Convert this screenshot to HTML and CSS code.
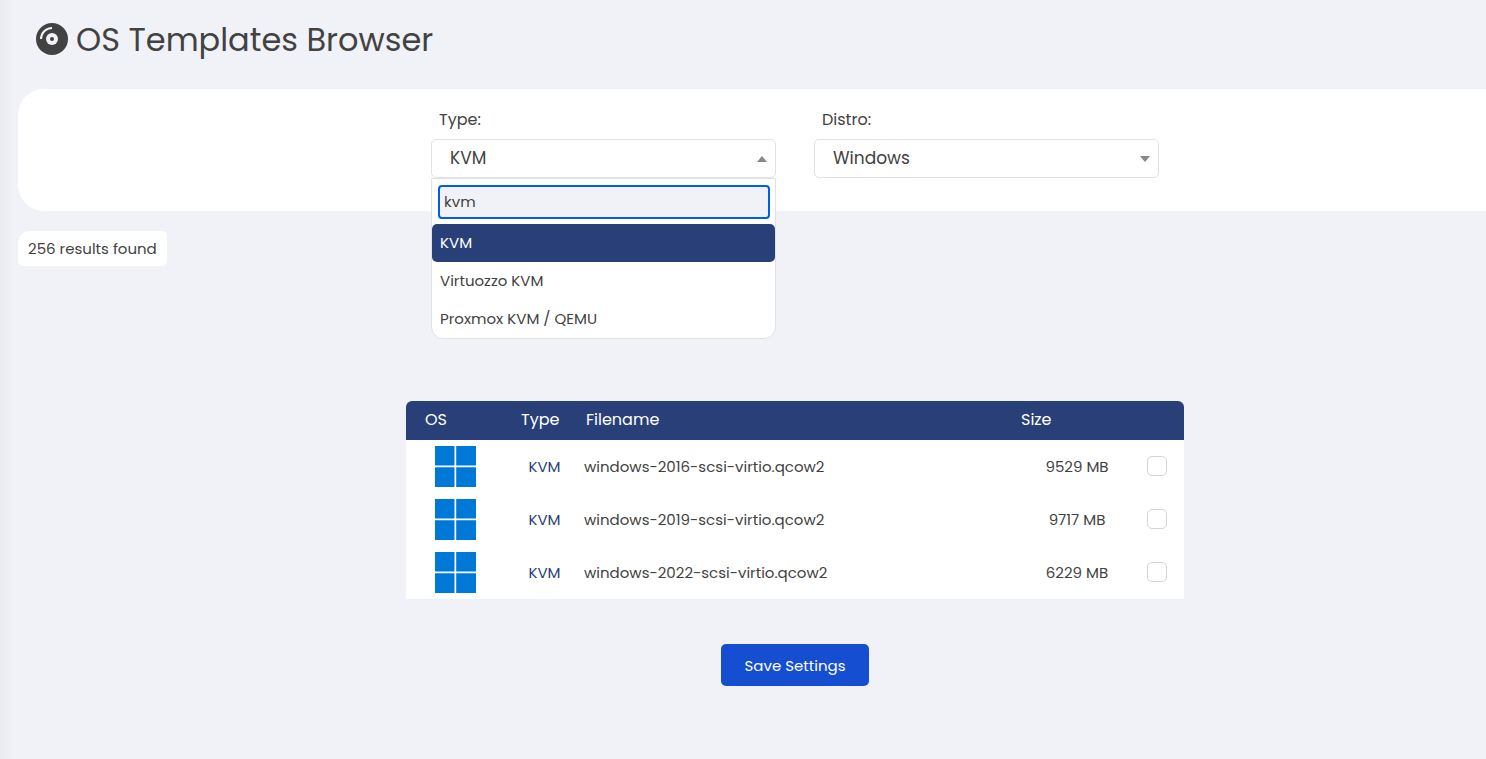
FILE: index.html
```
<!DOCTYPE html>
<html lang="en">
<head>
<meta charset="utf-8">
<meta name="viewport" content="width=device-width, initial-scale=1">
<title>OS Templates Browser</title>
<link rel="stylesheet" href="styles.css">
</head>
<body>
<main class="content">
  <h1 class="page-title">
    <svg class="disc" viewBox="0 0 32 32" aria-hidden="true">
      <circle cx="16" cy="16" r="16" fill="#424242"/>
      <circle cx="16" cy="16" r="6" fill="#f1f2f8"/>
      <circle cx="16" cy="16" r="2" fill="#424242"/>
      <path d="M5 16A11 11 0 0 1 16 5" fill="none" stroke="#f1f2f8" stroke-width="2"/>
    </svg>
    <span>OS Templates Browser</span>
  </h1>

  <form class="filters">
    <div class="field">
      <label class="field-label" for="type">Type:</label>
      <div class="select-box is-open">
        <select id="type" class="select">
          <option selected>KVM</option>
          <option>Virtuozzo KVM</option>
          <option>Proxmox KVM / QEMU</option>
        </select>
        <div class="dropdown">
          <div class="search-wrap"><input class="search" type="text" value="kvm" aria-label="Search types"></div>
          <ul class="options" role="listbox" aria-label="Type">
            <li class="option is-active" role="option" aria-selected="true">KVM</li>
            <li class="option" role="option" aria-selected="false">Virtuozzo KVM</li>
            <li class="option" role="option" aria-selected="false">Proxmox KVM / QEMU</li>
          </ul>
        </div>
      </div>
    </div>
    <div class="field">
      <label class="field-label" for="distro">Distro:</label>
      <div class="select-box">
        <select id="distro" class="select">
          <option selected>Windows</option>
        </select>
      </div>
    </div>
  </form>

  <p class="results">256 results found</p>

  <form class="templates-form">
    <table class="templates">
      <colgroup><col class="col-os"><col class="col-type"><col><col class="col-size"><col class="col-check"></colgroup>
      <thead>
        <tr><th class="head-os">OS</th><th class="head-type">Type</th><th>Filename</th><th class="head-size">Size</th><th></th></tr>
      </thead>
      <tbody>
        <tr>
          <td class="cell-os"><svg class="win" viewBox="0 0 41 41" role="img" aria-label="Windows"><path fill="#0078d7" d="M0 0h19.500v19.500H0zM21.200 0H41v19.500H21.200zM0 21.200h19.500V41H0zM21.200 21.200H41V41H21.200z"/></svg></td>
          <td class="cell-type">KVM</td>
          <td><label for="t2016">windows-2016-scsi-virtio.qcow2</label></td>
          <td class="cell-size">9529 MB</td>
          <td class="cell-check"><input id="t2016" class="check" type="checkbox"></td>
        </tr>
        <tr>
          <td class="cell-os"><svg class="win" viewBox="0 0 41 41" role="img" aria-label="Windows"><path fill="#0078d7" d="M0 0h19.500v19.500H0zM21.200 0H41v19.500H21.200zM0 21.200h19.500V41H0zM21.200 21.200H41V41H21.200z"/></svg></td>
          <td class="cell-type">KVM</td>
          <td><label for="t2019">windows-2019-scsi-virtio.qcow2</label></td>
          <td class="cell-size">9717 MB</td>
          <td class="cell-check"><input id="t2019" class="check" type="checkbox"></td>
        </tr>
        <tr>
          <td class="cell-os"><svg class="win" viewBox="0 0 41 41" role="img" aria-label="Windows"><path fill="#0078d7" d="M0 0h19.500v19.500H0zM21.200 0H41v19.500H21.200zM0 21.200h19.500V41H0zM21.200 21.200H41V41H21.200z"/></svg></td>
          <td class="cell-type">KVM</td>
          <td><label for="t2022">windows-2022-scsi-virtio.qcow2</label></td>
          <td class="cell-size">6229 MB</td>
          <td class="cell-check"><input id="t2022" class="check" type="checkbox"></td>
        </tr>
      </tbody>
    </table>
    <button class="save" type="submit">Save Settings</button>
  </form>
</main>
</body>
</html>
```
FILE: styles.css
```
* {
  box-sizing: border-box;
}

body {
  margin: 0;
  min-height: 100vh;
  background: #f1f2f8 linear-gradient(90deg, #e9eaee, #f1f2f8) no-repeat 0 0 / 14px 100%;
  color: #424242;
  font-family: Poppins, Inter, "Open Sans", sans-serif;
  font-size: 15px;
  line-height: 23px;
}

.content {
  margin-left: 18px;
}

.page-title {
  display: flex;
  align-items: center;
  gap: 8px;
  margin: 0;
  padding: 16px 18px 25px;
  font-size: 32px;
  font-weight: 400;
  line-height: 48px;
}

.disc {
  width: 32px;
  height: 32px;
  margin-bottom: 2px;
}

.filters {
  display: flex;
  justify-content: center;
  gap: 38px;
  padding: 19px 0 33px 86px;
  border-radius: 26px 0 0 26px;
  background: #fff;
}

.field {
  width: 345px;
}

.field-label {
  display: block;
  padding: 0 8px 7px;
  font-size: 16px;
  line-height: 24px;
}

.select-box {
  position: relative;
}

.select {
  display: block;
  width: 100%;
  height: 39px;
  padding: 0 30px 0 18px;
  appearance: none;
  border: 1px solid #e2e2e2;
  border-radius: 5px;
  background: #fff;
  color: #424242;
  font: inherit;
  font-size: 17px;
}

.select-box::after {
  content: "";
  position: absolute;
  top: 17px;
  right: 9px;
  border: 5px solid transparent;
  border-top: 6px solid #888;
  border-bottom: 0;
  pointer-events: none;
}

.select-box.is-open::after {
  border-top: 0;
  border-bottom: 6px solid #888;
}

.dropdown {
  position: absolute;
  z-index: 1;
  top: 100%;
  left: 0;
  width: 100%;
  border: 1px solid #e2e2e2;
  border-radius: 0 0 12px 12px;
  background: #fff;
}

.search-wrap {
  padding: 6px 5px 5px 6px;
}

.search {
  display: block;
  width: 100%;
  height: 34px;
  padding: 0 4px 2px;
  border: 2px solid #0060df;
  border-radius: 4px;
  outline: 0;
  background: #f1f2f8;
  color: #424242;
  font: inherit;
}

.options {
  margin: 0;
  padding: 0;
  list-style: none;
}

.option {
  padding: 7px 8px;
  line-height: 24px;
}

.option.is-active {
  border-radius: 5px;
  background: #293f77;
  color: #fff;
}

.results {
  width: fit-content;
  margin: 20px 0 135px;
  padding: 6px 10px;
  border-radius: 12px 5px 5px 5px;
  background: #fff;
}

.templates-form {
  display: flex;
  flex-direction: column;
  align-items: center;
  gap: 45px;
  padding: 0 0 60px 86px;
}

.templates {
  width: 56%;
  min-width: 778px;
  table-layout: fixed;
  border-collapse: collapse;
  border-radius: 6px 6px 0 0;
  overflow: hidden;
  background: #fff;
}

.col-os {
  width: 99px;
}

.col-type {
  width: 79px;
}

.col-size {
  width: 130px;
}

.col-check {
  width: 42px;
}

.templates th {
  height: 39px;
  padding: 0 2px 2px;
  background: #293f77;
  color: #fff;
  font-size: 16px;
  font-weight: 400;
  text-align: left;
}

.templates .head-os {
  padding-left: 19px;
}

.templates .head-type {
  padding-left: 16px;
}

.templates .head-size {
  padding-left: 9px;
}

.templates td {
  height: 53px;
  padding: 0;
}

.templates .cell-os,
.templates .cell-type,
.templates .cell-size {
  text-align: center;
}

.templates .cell-type {
  color: #293f77;
}

.templates .cell-check {
  padding: 0 0 2px 5px;
}

.win {
  display: block;
  width: 41px;
  height: 41px;
  margin: 0 auto;
}

.check {
  display: block;
  width: 20px;
  height: 20px;
  margin: 0;
  appearance: none;
  border: 1px solid #d5d5d5;
  border-radius: 5px;
  background: #fff;
}

.check:checked {
  background: #164ed1;
}

.save {
  height: 42px;
  padding: 0 24px;
  border: 0;
  border-radius: 5px;
  background: #164ed1;
  color: #fff;
  font: inherit;
}
```
